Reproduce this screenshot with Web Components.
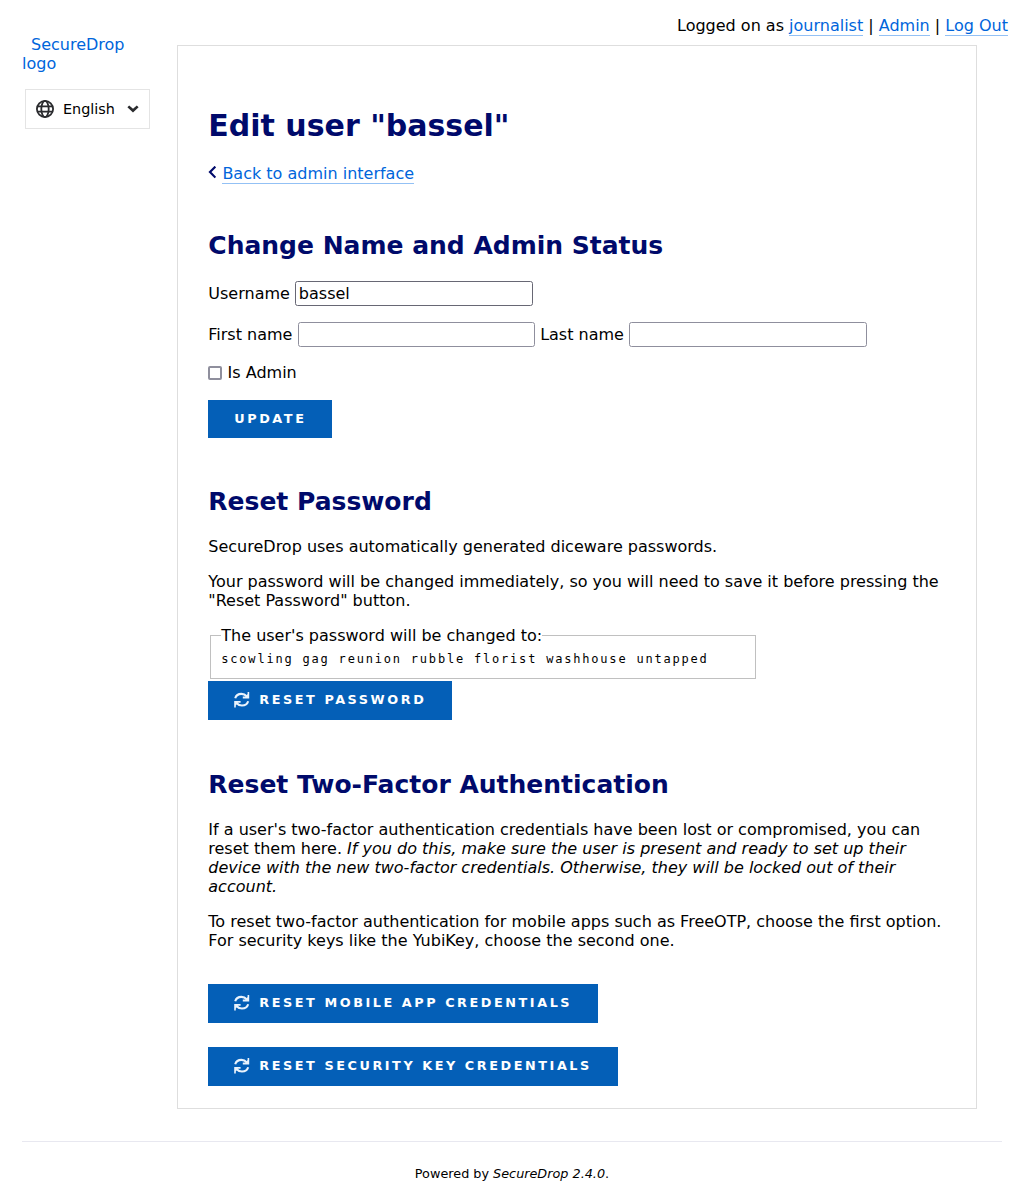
<!DOCTYPE html>
<html lang="en">
<head>
<meta charset="utf-8">
<title>SecureDrop</title>
<style>
html{background:#fff}
body{margin:0;font:16px/19px "DejaVu Sans",sans-serif;color:#000}
</style>
</head>
<body>
<journalist-app></journalist-app>
<script>
const define = (name, html) => {
  const t = document.createElement('template');
  t.innerHTML = html;
  customElements.define(name, class extends HTMLElement {
    constructor() {
      super();
      this.attachShadow({mode: 'open'}).append(t.content.cloneNode(true));
    }
  });
};

define('text-link', `<style>:host{display:inline}
a{color:#0065db;text-decoration:none;border-bottom:1px solid #93c1f5}</style><a><slot></slot></a>`);

define('user-bar', `<style>:host{display:block;text-align:right;padding:16px 16px 10px}</style>
Logged on as <text-link>journalist</text-link> | <text-link>Admin</text-link> | <text-link>Log Out</text-link>`);

define('language-picker', `<style>
:host{display:flex;box-sizing:border-box;align-items:center;width:125px;height:40px;border:1px solid #e4e4e4;padding:0 10px;font-size:14.4px}
span{margin-left:9px;flex:1}svg{display:block}
</style>
<svg width="18" height="18" viewBox="0 0 18 18" fill="none" stroke="#2a2b2e" stroke-width="1.8"><circle cx="9" cy="9" r="8.1"/><ellipse cx="9" cy="9" rx="3.7" ry="8.1"/><path d="M1.5 6.3h15M1.5 11.7h15"/></svg>
<span>English</span>
<svg width="12" height="8" viewBox="0 0 12 8" fill="#2a2b2e"><path d="M.4 2.3 2.2.5 6 3.7 9.8.5l1.8 1.8L6 7.6z"/></svg>`);

define('side-bar', `<style>
:host{display:block;width:177px;padding-left:22px;box-sizing:border-box}
a{display:block;color:#0065db;text-indent:9px;width:120px;margin-bottom:16px}
language-picker{margin-left:3px}
</style><a>SecureDrop logo</a><language-picker></language-picker>`);

define('page-title', `<style>:host{display:block}h1{margin:0 0 21px;font-size:30px;line-height:35px;color:#000a6b}</style><h1><slot></slot></h1>`);
define('section-title', `<style>:host{display:block}h2{margin:0 0 21px;font-size:25px;line-height:29px;color:#000a6b}</style><h2><slot></slot></h2>`);
define('text-block', `<style>:host{display:block}p{margin:0 0 16px}</style><p><slot></slot></p>`);

define('back-link', `<style>:host{display:flex}svg{display:block;margin:2px 6.1px 0 0}</style>
<svg width="8" height="13" viewBox="0 0 8 13" fill="none" stroke="#000a6b" stroke-width="2.2"><path d="M7.4.6 2 6.1 7.4 11.6"/></svg>
<text-link>Back to admin interface</text-link>`);

customElements.define('text-field', class extends HTMLElement {
  connectedCallback() {
    const root = this.attachShadow({mode: 'open'});
    root.innerHTML = `<style>:host{display:flex;align-items:center}
label{margin-right:5px}
input{box-sizing:border-box;width:238px;height:25px;margin:0;padding:2px 3px;border:1px solid #8f8f9d;border-radius:2.5px;font:inherit;color:#000;background:#fff;outline:0}
:host([active]) input{border-color:#676774}
:host([snug]) label{margin-right:5.4px}:host([snug]) input{width:237.3px}</style><label></label><input type="text">`;
    root.querySelector('label').textContent = this.getAttribute('label');
    root.querySelector('input').value = this.getAttribute('value') || '';
  }
});

define('check-field', `<style>:host{display:flex;align-items:center}
i{box-sizing:border-box;width:14px;height:14px;border:2px solid #8f8f9d;border-radius:2px;margin:1px 5.3px 0 0}</style><i></i><slot></slot>`);

customElements.define('action-button', class extends HTMLElement {
  connectedCallback() {
    this.attachShadow({mode: 'open'}).innerHTML = `<style>:host{display:flex}
button{display:flex;align-items:center;box-sizing:border-box;height:39px;margin:0;border:0;padding:0 25.8px 1px 26px;background:#045fb7;color:#fff;font:bold 12.8px/15px "DejaVu Sans",sans-serif;letter-spacing:2.56px;white-space:nowrap}
span{padding-bottom:1px}
:host([plain]) button{height:38px}:host([plain]) span{padding:0}
svg{display:block;margin-right:9px}</style><button>${this.hasAttribute('plain') ? '' :
`<svg width="16" height="16" viewBox="0 0 16 16"><g fill="none" stroke="#eaf3fc" stroke-width="2.1"><path d="M1.2 6.2C2.1 3.4 4.4 1.9 7.4 1.9c2.2 0 3.9.8 5.2 2.3"/><path d="M14.2 9.2c-.9 2.8-3.2 4.3-6.2 4.3-2.2 0-3.9-.8-5.2-2.3"/></g><path fill="#eaf3fc" d="M15.2 0v6.4H8.8V4.6h2.7L13.6 2V0zM.2 15.4V9h6.4v1.8H3.9L1.8 13.4v2z"/></svg>`}<span><slot></slot></span></button>`;
  }
});

define('password-box', `<style>:host{display:block}
fieldset{box-sizing:border-box;width:546px;margin:0 2px 2px;padding:7px 10px 11px;border:1px solid #c0c0c0;min-width:0}
legend{padding:0}
div{font:12px/15px "DejaVu Sans Mono",monospace;letter-spacing:1.8px;white-space:nowrap}
</style><fieldset><legend>The user's password will be changed to:</legend><div><slot></slot></div></fieldset>`);

define('edit-panel', `<style>
:host{display:block;flex:none;box-sizing:border-box;width:800px;height:1064px;border:1px solid #dedede;padding:62px 29.7px 22px 30.3px}
section{margin-top:48px}.reset{margin-top:49px}.two{margin-top:50px}
.row{display:flex;gap:5px;margin-bottom:16px}check-field{margin-bottom:18px}
.creds{display:flex;flex-direction:column;gap:24px;margin-top:34px}
</style>
<page-title>Edit user "bassel"</page-title>
<back-link></back-link>
<section><section-title>Change Name and Admin Status</section-title>
<div class="row"><text-field active label="Username" value="bassel"></text-field></div>
<div class="row"><text-field snug label="First name"></text-field><text-field label="Last name"></text-field></div>
<check-field>Is Admin</check-field>
<action-button plain>UPDATE</action-button></section>
<section class="reset"><section-title>Reset Password</section-title>
<text-block>SecureDrop uses automatically generated diceware passwords.</text-block>
<text-block>Your password will be changed immediately, so you will need to save it before pressing the "Reset Password" button.</text-block>
<password-box>scowling gag reunion rubble florist washhouse untapped</password-box>
<action-button>RESET PASSWORD</action-button></section>
<section class="two"><section-title>Reset Two-Factor Authentication</section-title>
<text-block>If a user's two-factor authentication credentials have been lost or compromised, you can reset them here. <em>If you do this, make sure the user is present and ready to set up their device with the new two-factor credentials. Otherwise, they will be locked out of their account.</em></text-block>
<text-block>To reset two-factor authentication for mobile apps such as FreeOTP, choose the first option. For security keys like the YubiKey, choose the second one.</text-block>
<div class="creds"><action-button>RESET MOBILE APP CREDENTIALS</action-button><action-button>RESET SECURITY KEY CREDENTIALS</action-button></div></section>`);

define('page-footer', `<style>:host{display:block;margin:32px 22px 0;border-top:1px solid #e8e8f0;padding-top:24px;text-align:center;font-size:12.8px;line-height:15px}</style>Powered by <em>SecureDrop 2.4.0</em>.`);

define('journalist-app', `<style>:host{display:block;height:1192px;overflow:hidden}
.cols{display:flex}side-bar{margin-top:-10px;flex:none}</style>
<user-bar></user-bar><div class="cols"><side-bar></side-bar><edit-panel></edit-panel></div><page-footer></page-footer>`);
</script>
</body>
</html>
